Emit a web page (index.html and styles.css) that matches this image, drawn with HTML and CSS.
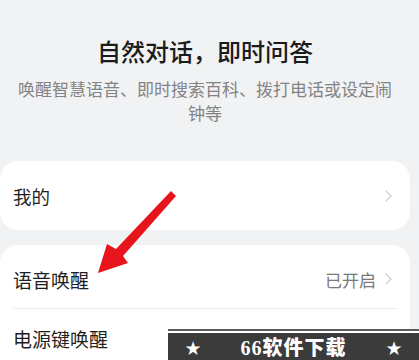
FILE: index.html
```html
<!DOCTYPE html>
<html lang="zh">
<head>
<meta charset="utf-8">
<link rel="stylesheet" href="styles.css">
</head>
<body>
<div class="page">
  <header class="intro">
    <h1 class="title">自然对话，即时问答</h1>
    <p class="desc">唤醒智慧语音、即时搜索百科、拨打电话或设定闹钟等</p>
  </header>
  <section class="card">
    <div class="row row-single">
      <span class="label">我的</span>
      <span class="chev"></span>
    </div>
  </section>
  <section class="card card-two">
    <div class="row row-first">
      <span class="label">语音唤醒</span>
      <span class="side"><span class="value">已开启</span><span class="chev"></span></span>
    </div>
    <div class="divider"></div>
    <div class="row row-second">
      <span class="label">电源键唤醒</span>
    </div>
  </section>
</div>
<svg class="arrow" width="419" height="360" viewBox="0 0 419 360">
  <polygon points="171,191 176,196 123,256 128,263 98,273 107,244 116,249" fill="#e8141c"/>
</svg>
<div class="banner">
  <div class="banner-line"></div>
  <div class="banner-body">
    <span class="star">★</span>
    <span class="brand">66软件下载</span>
    <span class="star">★</span>
  </div>
</div>
</body>
</html>
```
FILE: styles.css
```css
html, body {
  margin: 0;
  padding: 0;
  background: #f1f2f4;
  width: 419px;
  height: 360px;
  overflow: hidden;
}
body {
  font-family: "Noto Sans CJK SC", "Noto Sans", sans-serif;
  position: relative;
}
.page {
  width: 410px;
}
.intro {
  padding: 35px 15px 0;
  text-align: center;
}
.title {
  margin: 0;
  font-size: 24px;
  line-height: 32px;
  font-weight: 500;
  color: #1b1b1b;
}
.desc {
  margin: 10px 0 0;
  font-size: 17px;
  line-height: 24px;
  color: #838383;
}
.card {
  background: #ffffff;
  border-radius: 18px;
  margin-top: 36px;
}
.card-two {
  margin-top: 15px;
  height: 115px;
  border-bottom-left-radius: 0;
  border-bottom-right-radius: 0;
}
.row {
  display: flex;
  align-items: center;
  justify-content: space-between;
  padding: 0 17px 0 13px;
}
.row-single {
  height: 69px;
}
.row-first {
  height: 63px;
  padding-top: 5px;
  box-sizing: border-box;
}
.row-second {
  height: 51px;
  align-items: flex-end;
  padding-bottom: 8px;
  box-sizing: border-box;
}
.label {
  font-size: 19px;
  color: #1f1f1f;
}
.row-single .label {
  font-size: 18.5px;
}
.side {
  display: flex;
  align-items: center;
  gap: 6px;
}
.value {
  font-size: 17px;
  color: #7a7a7a;
}
.chev {
  width: 7px;
  height: 7px;
  border-top: 1.5px solid #c4c4c4;
  border-right: 1.5px solid #c4c4c4;
  transform: rotate(45deg);
  margin-right: 3px;
}
.divider {
  height: 1px;
  background: #ebebeb;
  margin: 0 13px;
}
.arrow {
  position: absolute;
  left: 0;
  top: 0;
}
.banner {
  position: absolute;
  left: 168px;
  top: 329px;
  width: 251px;
  height: 31px;
}
.banner-line {
  height: 2px;
  background: #5a5a5a;
  border-bottom: 2px solid #ffffff;
}
.banner-body {
  height: 27px;
  background: #3b3b3b;
  display: flex;
  align-items: center;
  color: #ffffff;
}
.star {
  font-family: "DejaVu Sans", sans-serif;
  font-size: 19px;
  line-height: 24px;
  width: 50px;
  text-align: center;
  padding-top: 3px;
}
.brand {
  flex: 1;
  text-align: center;
  font-family: "Liberation Serif", "Noto Sans CJK SC", serif;
  font-weight: 900;
  font-size: 20px;
  line-height: 24px;
  letter-spacing: 1px;
  padding-top: 2px;
}
```
